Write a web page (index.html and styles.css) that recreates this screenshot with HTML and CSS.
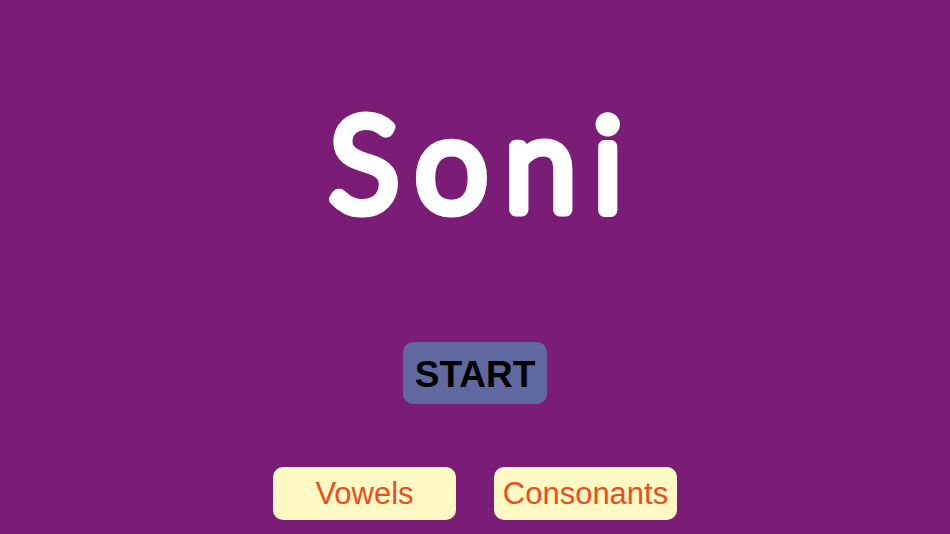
FILE: index.html
```html
<!DOCTYPE html>
<html>
<head>
<meta charset="utf-8">
<link rel="stylesheet" href="styles.css">
</head>
<body>
<main class="screen">
  <svg class="title" width="440" height="164" viewBox="0 0 440 164">
    <text x="230" y="132" text-anchor="middle" class="title-text">Soni</text>
  </svg>
  <button class="start">START</button>
  <div class="choices">
    <button class="choice">Vowels</button>
    <button class="choice">Consonants</button>
  </div>
</main>
</body>
</html>
```
FILE: styles.css
```css
html, body {
  margin: 0;
  padding: 0;
  background: #7b1c77;
}
.screen {
  width: 950px;
  height: 534px;
  display: flex;
  flex-direction: column;
  align-items: center;
  overflow: hidden;
}
.title {
  display: block;
  margin-top: 78px;
  overflow: visible;
}
.title-text {
  font-family: "Lato", "DejaVu Sans", sans-serif;
  font-weight: 300;
  font-size: 128px;
  letter-spacing: 18px;
  fill: #ffffff;
  stroke: #ffffff;
  stroke-width: 13px;
  stroke-linejoin: round;
  stroke-linecap: round;
}
.start {
  margin-top: 100px;
  width: 144px;
  height: 62px;
  border: none;
  border-radius: 10px;
  background: #6068a0;
  color: #000000;
  font-family: "Liberation Sans", Arial, sans-serif;
  font-weight: 700;
  font-size: 37px;
  padding: 3px 0 0 0;
}
.choices {
  margin-top: 63px;
  display: flex;
  gap: 38px;
}
.choice {
  width: 183px;
  height: 53px;
  border: none;
  border-radius: 10px;
  background: #fff9c4;
  color: #f04b1b;
  font-family: "Liberation Sans", Arial, sans-serif;
  font-size: 31px;
  padding: 0;
}
```
